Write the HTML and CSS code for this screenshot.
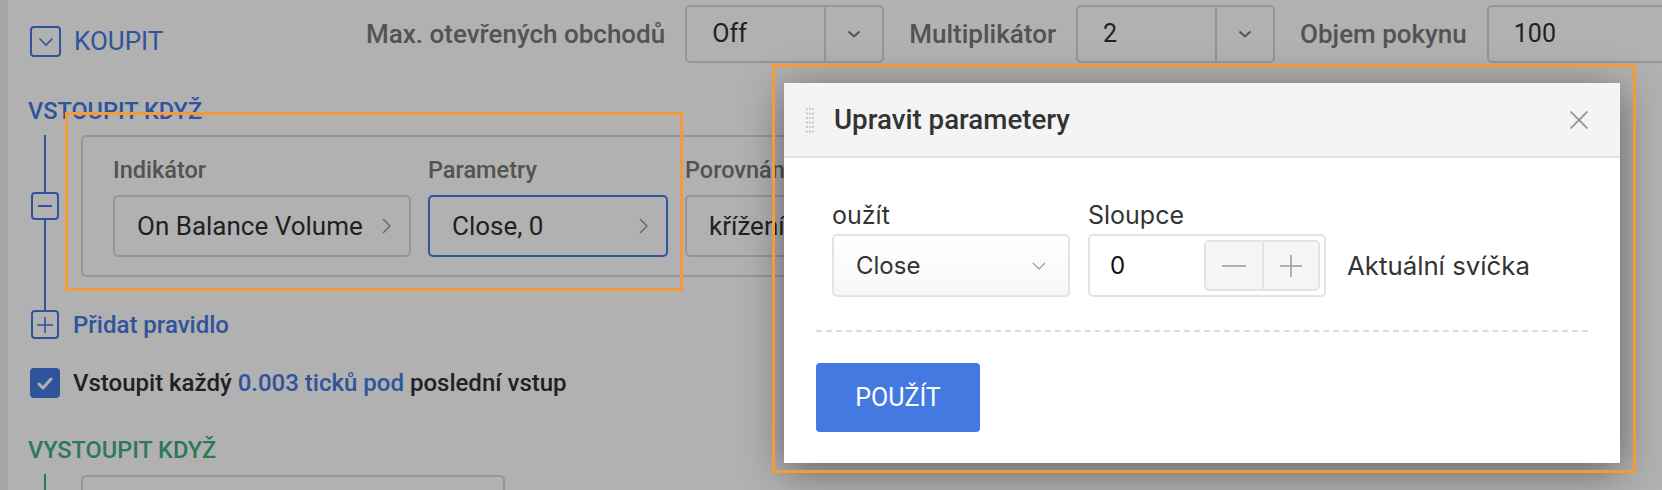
FILE: index.html
```html
<!DOCTYPE html>
<html lang="cs">
<head>
<meta charset="utf-8">
<title>Upravit parametery</title>
<link rel="stylesheet" href="styles.css">
</head>
<body>
<div class="page">
  <aside class="strip"></aside>
  <main class="main">
    <header class="head">
      <div class="side-toggle">
        <span class="tbox"><svg width="16" height="10" viewBox="0 0 16 10"><polyline points="1.5,1.5 8,8 14.5,1.5" fill="none" stroke="#4479e1" stroke-width="1.6"/></svg></span>
        <span class="side-name">KOUPIT</span>
      </div>
      <div class="params">
        <span class="plabel">Max. otevřených obchodů</span>
        <div class="combo"><span class="cval">Off</span><span class="carr"><svg width="14" height="8" viewBox="0 0 14 8"><polyline points="1.5,1.5 7,6.5 12.5,1.5" fill="none" stroke="#777" stroke-width="2"/></svg></span></div>
        <span class="plabel">Multiplikátor</span>
        <div class="combo"><span class="cval">2</span><span class="carr"><svg width="14" height="8" viewBox="0 0 14 8"><polyline points="1.5,1.5 7,6.5 12.5,1.5" fill="none" stroke="#777" stroke-width="2"/></svg></span></div>
        <span class="plabel">Objem pokynu</span>
        <div class="numbox">100</div>
      </div>
    </header>

    <section class="block">
      <h3 class="sec-title">VSTOUPIT KDYŽ</h3>
      <div class="rule-row">
        <div class="gutter">
          <i class="seg"></i>
          <span class="sqbtn"><svg width="14" height="4" viewBox="0 0 14 4"><line x1="0" y1="2" x2="14" y2="2" stroke="#4479e1" stroke-width="2"/></svg></span>
          <i class="seg"></i>
          <i class="seg tail"></i>
        </div>
        <div class="card">
          <div class="field">
            <span class="flabel">Indikátor</span>
            <div class="pick w-ind"><span>On Balance Volume</span><svg width="9" height="16" viewBox="0 0 9 16"><polyline points="1,1 8,8 1,15" fill="none" stroke="#999" stroke-width="1.5"/></svg></div>
          </div>
          <div class="field">
            <span class="flabel">Parametry</span>
            <div class="pick w-par active"><span>Close, 0</span><svg width="9" height="16" viewBox="0 0 9 16"><polyline points="1,1 8,8 1,15" fill="none" stroke="#999" stroke-width="1.5"/></svg></div>
          </div>
          <div class="field">
            <span class="flabel">Porovnání</span>
            <div class="pick w-cmp"><span>křížení</span><svg width="9" height="16" viewBox="0 0 9 16"><polyline points="1,1 8,8 1,15" fill="none" stroke="#999" stroke-width="1.5"/></svg></div>
          </div>
        </div>
      </div>
      <div class="add-row">
        <span class="sqbtn plus"><svg width="16" height="16" viewBox="0 0 16 16"><line x1="0" y1="8" x2="16" y2="8" stroke="#4479e1" stroke-width="1.6"/><line x1="8" y1="0" x2="8" y2="16" stroke="#4479e1" stroke-width="1.6"/></svg></span>
        <span class="add-text">Přidat pravidlo</span>
      </div>
    </section>

    <div class="check-row">
      <span class="cbox"><svg width="16" height="13" viewBox="0 0 16 13"><polyline points="2,7 6,11 14,2" fill="none" stroke="#fff" stroke-width="3" stroke-linecap="round" stroke-linejoin="round"/></svg></span>
      <span class="check-text">Vstoupit každý <span class="hl">0.003 ticků pod</span> poslední vstup</span>
    </div>

    <section class="block exit">
      <h3 class="sec-title green">VYSTOUPIT KDYŽ</h3>
      <div class="rule-row">
        <div class="gutter"><i class="seg green"></i></div>
        <div class="card exit-card"></div>
      </div>
    </section>
  </main>
</div>

<div class="dim"></div>

<div class="modal">
  <div class="m-head">
    <svg class="grip" width="10" height="26" viewBox="0 0 10 26">
      <g fill="#b9b9b9">
        <circle cx="2" cy="2" r="0.9"/><circle cx="5" cy="2" r="0.9"/><circle cx="8" cy="2" r="0.9"/>
        <circle cx="2" cy="6.5" r="0.9"/><circle cx="5" cy="6.5" r="0.9"/><circle cx="8" cy="6.5" r="0.9"/>
        <circle cx="2" cy="11" r="0.9"/><circle cx="5" cy="11" r="0.9"/><circle cx="8" cy="11" r="0.9"/>
        <circle cx="2" cy="15.5" r="0.9"/><circle cx="5" cy="15.5" r="0.9"/><circle cx="8" cy="15.5" r="0.9"/>
        <circle cx="2" cy="20" r="0.9"/><circle cx="5" cy="20" r="0.9"/><circle cx="8" cy="20" r="0.9"/>
        <circle cx="2" cy="24.5" r="0.9"/><circle cx="5" cy="24.5" r="0.9"/><circle cx="8" cy="24.5" r="0.9"/>
      </g>
    </svg>
    <span class="m-title">Upravit parametery</span>
    <svg class="m-close" width="20" height="20" viewBox="0 0 20 20"><line x1="1.5" y1="1.5" x2="18.5" y2="18.5" stroke="#9a9a9a" stroke-width="1.8"/><line x1="18.5" y1="1.5" x2="1.5" y2="18.5" stroke="#9a9a9a" stroke-width="1.8"/></svg>
  </div>
  <div class="m-body">
    <div class="m-form">
      <div class="m-field">
        <span class="m-label">oužít</span>
        <div class="m-select"><span>Close</span><svg width="14" height="8" viewBox="0 0 14 8"><polyline points="1,1 7,7 13,1" fill="none" stroke="#999" stroke-width="1.2"/></svg></div>
      </div>
      <div class="m-field">
        <span class="m-label">Sloupce</span>
        <div class="m-num">
          <span>0</span>
          <div class="stepper">
            <span class="step"><svg width="24" height="2" viewBox="0 0 24 2"><line x1="0" y1="1" x2="24" y2="1" stroke="#a0a0a0" stroke-width="1.6"/></svg></span>
            <span class="step"><svg width="22" height="22" viewBox="0 0 22 22"><line x1="0" y1="11" x2="22" y2="11" stroke="#a0a0a0" stroke-width="1.6"/><line x1="11" y1="0" x2="11" y2="22" stroke="#a0a0a0" stroke-width="1.6"/></svg></span>
          </div>
        </div>
      </div>
      <span class="m-note">Aktuální svíčka</span>
    </div>
    <div class="m-sep"></div>
    <button class="m-btn" type="button">POUŽÍT</button>
  </div>
</div>

<div class="mark mark-a"></div>
<div class="mark mark-b"></div>
</body>
</html>
```

FILE: styles.css
```css
* { box-sizing: border-box; margin: 0; padding: 0; }
html, body { width: 1662px; height: 490px; overflow: hidden; }
body {
  font-family: Roboto, "Noto Sans", "Liberation Sans", sans-serif;
  background: #fff;
  color: #303030;
  position: relative;
}

.page { display: flex; height: 490px; }
.strip { width: 8px; flex: none; background: #f0f0f0; }
.main { flex: 1; min-width: 0; padding-left: 22px; }

/* header row */
.head { display: flex; align-items: flex-start; padding-top: 5px; height: 63px; white-space: nowrap; }
.side-toggle { width: 336px; flex: none; display: flex; align-items: center; margin-top: 21px; }
.tbox {
  width: 31px; height: 31px; border: 2px solid #4479e1; border-radius: 4px;
  display: flex; align-items: center; justify-content: center; flex: none;
}
.side-name { margin-left: 13px; font-size: 26px; line-height: 31px; color: #4479e1; }
.params { display: flex; align-items: center; height: 58px; }
.plabel { font-size: 26px; font-weight: 500; color: #787878; margin-right: 20px; }
.combo {
  width: 199px; height: 58px; flex: none; border: 2px solid #d9d9d9; border-radius: 5px;
  display: flex; margin-right: 25px;
}
.cval { flex: 1; padding-left: 25px; font-size: 25px; line-height: 54px; color: #303030; }
.carr { width: 58px; flex: none; border-left: 2px solid #d9d9d9; display: flex; align-items: center; justify-content: center; }
.numbox {
  width: 260px; height: 58px; flex: none; border: 2px solid #d9d9d9; border-radius: 5px;
  padding-left: 25px; font-size: 25px; line-height: 54px; color: #303030;
}

/* sections */
.sec-title { margin-top: 35px; margin-left: -2px; font-size: 23.5px; font-weight: 500; line-height: 27px; color: #4479e1; }
.sec-title.green { color: #43ae81; margin-top: 39px; }

.rule-row { display: flex; margin-top: 10px; }
.gutter { width: 30px; flex: none; display: flex; flex-direction: column; align-items: center; }
.seg { display: block; width: 2px; flex: 1; background: #4479e1; }
.seg.tail { flex: none; height: 33px; }
.seg.green { background: #43ae81; }
.sqbtn {
  width: 28px; height: 28px; flex: none; border: 2px solid #4479e1; border-radius: 4px;
  display: flex; align-items: center; justify-content: center;
}

.card {
  width: 1220px; flex: none; margin-left: 21px; margin-bottom: 33px;
  border: 2px solid #d9d9d9; border-radius: 5px;
  padding: 20px 0 18px 30px; display: flex; gap: 17px;
}
.field { display: flex; flex-direction: column; gap: 12px; }
.flabel { font-size: 23.5px; font-weight: 500; line-height: 26px; color: #787878; }
.pick {
  height: 62px; border: 2px solid #d9d9d9; border-radius: 5px;
  display: flex; align-items: center; justify-content: space-between;
  padding: 0 18px 0 22px; font-size: 26px; color: #303030; white-space: nowrap;
}
.pick.active { border-color: #4479e1; }
.w-ind { width: 298px; }
.w-par { width: 240px; }
.w-cmp { width: 260px; }

.add-row { display: flex; align-items: center; gap: 14px; margin-left: 1px; }
.sqbtn.plus { height: 29px; }
.add-text { font-size: 24px; font-weight: 500; color: #4479e1; }

.check-row { display: flex; align-items: center; gap: 13px; margin-top: 29px; }
.cbox {
  width: 30px; height: 30px; flex: none; background: #4479e1; border-radius: 4px;
  display: flex; align-items: center; justify-content: center;
}
.check-text { font-size: 24px; font-weight: 500; color: #303030; white-space: nowrap; }
.hl { color: #4479e1; }

.exit .gutter { height: 40px; }
.exit-card { width: 424px; height: 60px; margin-top: 1px; margin-bottom: 0; padding: 0; }

/* overlay */
.dim { position: absolute; inset: 0; background: rgba(0, 0, 0, 0.306); }

/* modal */
.modal {
  position: absolute; left: 784px; top: 83px; width: 836px; height: 380px;
  background: #fff; box-shadow: 0 8px 40px rgba(0, 0, 0, 0.45);
}
.m-head {
  height: 75px; background: #f4f4f4; border-bottom: 2px solid #e2e2e2;
  display: flex; align-items: center; padding: 0 31px 0 21px;
}
.grip { flex: none; margin-right: 19px; }
.m-title { flex: 1; font-size: 27.7px; font-weight: 500; color: #333; }
.m-close { flex: none; }

.m-body { padding: 44px 32px 30px; font-family: Inter, Roboto, sans-serif; }
.m-form { display: flex; align-items: flex-end; gap: 18px; padding-left: 16px; }
.m-field { display: flex; flex-direction: column; gap: 5px; }
.m-label { font-size: 25px; line-height: 27px; color: #333; }
.m-select {
  width: 238px; height: 63px; border: 2px solid #e4e4e4; border-radius: 5px;
  display: flex; align-items: center; justify-content: space-between;
  padding: 0 22px; font-size: 24px; color: #333;
  background: linear-gradient(#fff, #f7f7f7);
}
.m-num {
  width: 238px; height: 63px; border: 2px solid #e4e4e4; border-radius: 5px;
  display: flex; align-items: center; padding: 0 4px 0 20px; font-size: 24px; color: #111;
}
.stepper {
  margin-left: auto; display: flex; height: 51px;
  border: 2px solid #e4e4e4; border-radius: 5px; background: #f6f6f6;
}
.step { width: 56px; display: flex; align-items: center; justify-content: center; }
.step + .step { border-left: 2px solid #e4e4e4; }
.m-note { font-size: 25.8px; line-height: 63px; color: #333; margin-left: 3px; white-space: nowrap; }
.m-sep { margin-top: 33px; border-top: 2px dashed #dcdcdc; }
.m-btn {
  display: flex; align-items: center; justify-content: center;
  margin-top: 31px; width: 164px; height: 69px; border: none; border-radius: 4px;
  background: #4479e1; color: #fff; font-family: Roboto, sans-serif; font-size: 25px;
}

/* annotation frames */
.mark { position: absolute; border: 3px solid #f39a3b; pointer-events: none; }
.mark-a { left: 65px; top: 112px; width: 618px; height: 179px; }
.mark-b { left: 772px; top: 64px; width: 864px; height: 409px; }
```
